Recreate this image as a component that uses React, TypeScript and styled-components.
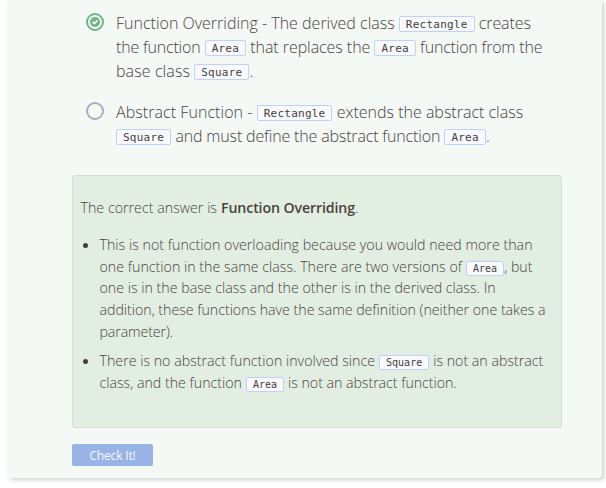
import React from "react";
import styled, { createGlobalStyle } from "styled-components";

const GlobalStyle = createGlobalStyle`
  *, *::before, *::after { box-sizing: border-box; }
  body {
    margin: 0;
    background: #ffffff;
    color: #4a4340;
    font-family: "Open Sans", sans-serif;
    font-weight: 300;
    overflow: hidden;
  }
`;

const Page = styled.div`
  height: 488px;
  padding: 0 4px 10px 7px;
`;

const Card = styled.main`
  display: flex;
  flex-direction: column;
  align-items: flex-start;
  height: 478px;
  padding: 11px 0 0 65px;
  border-radius: 0 0 4px 4px;
  background: #f4f9f6;
  box-shadow: 2px 2px 4px rgba(0, 0, 0, 0.18);
`;

const Options = styled.div`
  display: flex;
  flex-direction: column;
  gap: 17px;
  padding-left: 14px;
  font-size: 16px;
`;

const Option = styled.label`
  display: flex;
  gap: 12px;
`;

const RadioIcon = styled.svg`
  flex: none;
  width: 18px;
  height: 18px;
  margin-top: 2px;
`;

const Lines = styled.div`
  display: flex;
  flex-direction: column;
`;

const OptionLine = styled.div`
  display: flex;
  gap: 4.2px;
  height: 24px;
  line-height: 24px;
  white-space: nowrap;
`;

const Text = styled.span<{ $tracking?: number }>`
  letter-spacing: ${(p) => p.$tracking ?? 0}px;
`;

const Period = styled.span`
  margin-left: -4px;
`;

const Chip = styled.code`
  height: 16px;
  margin-top: 5px;
  padding: 0 6px;
  border: 1px solid #c0cffb;
  border-radius: 2px;
  background: #f8faff;
  color: #443e3b;
  font: 400 11px/15px "DejaVu Sans Mono", monospace;
  letter-spacing: 0.24px;
`;

const SmallChip = styled(Chip)`
  height: 15px;
  margin-top: 5px;
  font-size: 10px;
  line-height: 13px;
  letter-spacing: 0.02px;
`;

const Explanation = styled.section`
  width: 490px;
  height: 253px;
  margin-top: 27px;
  padding: 20.5px 0 0 7.5px;
  border: 1px solid #cfdfd2;
  border-radius: 3px;
  background: #e3eee3;
  font-size: 14.2px;
`;

const ExplanationLine = styled.div`
  display: flex;
  gap: 4px;
  height: 21.75px;
  line-height: 21.75px;
  white-space: nowrap;
`;

const Answer = styled.strong`
  font-weight: 600;
  letter-spacing: -0.123px;
`;

const Notes = styled.ul`
  display: flex;
  flex-direction: column;
  gap: 7.6px;
  margin: 15.5px 0 0;
  padding: 0;
  list-style: none;
`;

const Note = styled.li`
  display: flex;
  gap: 12px;
  padding-left: 2px;

  &::before {
    content: "";
    flex: none;
    width: 5px;
    height: 5px;
    margin-top: 9px;
    border-radius: 50%;
    background: #443c39;
  }
`;

const CheckButton = styled.button`
  width: 81px;
  height: 22px;
  margin-top: 16px;
  padding: 0;
  border: 0;
  border-radius: 2px;
  background: #98b3e6;
  color: #f5f8fe;
  font: 400 12px/23px "Open Sans", sans-serif;
  letter-spacing: -0.18px;
`;

function Radio({ checked = false }: { checked?: boolean }) {
  return (
    <RadioIcon viewBox="0 0 18 18" aria-hidden="true">
      <circle cx="9" cy="9" r="8" fill="none" stroke={checked ? "#6fb585" : "#aaacc3"} strokeWidth="2" />
      {checked && (
        <>
          <circle cx="9" cy="9" r="5" fill="#6fb585" />
          <path d="M6.7 8.9 8.5 10.7 11.4 7.3" fill="none" stroke="#ffffff" strokeWidth="1.5" />
        </>
      )}
    </RadioIcon>
  );
}

export default function App() {
  return (
    <>
      <GlobalStyle />
      <Page>
        <Card>
          <Options>
            <Option>
              <Radio checked />
              <Lines>
                <OptionLine>
                  <Text>Function Overriding - The derived class</Text>
                  <Chip>Rectangle</Chip>
                  <Text $tracking={-0.1}>creates</Text>
                </OptionLine>
                <OptionLine>
                  <Text $tracking={-0.2}>the function</Text>
                  <Chip>Area</Chip>
                  <Text $tracking={-0.06}>that replaces the</Text>
                  <Chip>Area</Chip>
                  <Text $tracking={-0.2}>function from the</Text>
                </OptionLine>
                <OptionLine>
                  <Text $tracking={0.1}>base class</Text>
                  <Chip>Square</Chip>
                  <Period>.</Period>
                </OptionLine>
              </Lines>
            </Option>
            <Option>
              <Radio />
              <Lines>
                <OptionLine>
                  <Text $tracking={0.06}>Abstract Function -</Text>
                  <Chip>Rectangle</Chip>
                  <Text>extends the abstract class</Text>
                </OptionLine>
                <OptionLine>
                  <Chip>Square</Chip>
                  <Text $tracking={-0.16}>and must define the abstract function</Text>
                  <Chip>Area</Chip>
                  <Period>.</Period>
                </OptionLine>
              </Lines>
            </Option>
          </Options>

          <Explanation>
            <ExplanationLine>
              <Text $tracking={0.027}>The correct answer is</Text>
              <Answer>Function Overriding</Answer>
              <Period>.</Period>
            </ExplanationLine>
            <Notes>
              <Note>
                <Lines>
                  <ExplanationLine>
                    <Text $tracking={0.025}>This is not function overloading because you would need more than</Text>
                  </ExplanationLine>
                  <ExplanationLine>
                    <Text $tracking={0.02}>one function in the same class. There are two versions of</Text>
                    <SmallChip>Area</SmallChip>
                    <Period>, but</Period>
                  </ExplanationLine>
                  <ExplanationLine>
                    <Text $tracking={0.01}>one is in the base class and the other is in the derived class. In</Text>
                  </ExplanationLine>
                  <ExplanationLine>
                    <Text $tracking={-0.017}>addition, these functions have the same definition (neither one takes a</Text>
                  </ExplanationLine>
                  <ExplanationLine>
                    <Text $tracking={-0.1}>parameter).</Text>
                  </ExplanationLine>
                </Lines>
              </Note>
              <Note>
                <Lines>
                  <ExplanationLine>
                    <Text $tracking={0.013}>There is no abstract function involved since</Text>
                    <SmallChip>Square</SmallChip>
                    <Text>is not an abstract</Text>
                  </ExplanationLine>
                  <ExplanationLine>
                    <Text>class, and the function</Text>
                    <SmallChip>Area</SmallChip>
                    <Text $tracking={-0.036}>is not an abstract function.</Text>
                  </ExplanationLine>
                </Lines>
              </Note>
            </Notes>
          </Explanation>

          <CheckButton type="button">Check It!</CheckButton>
        </Card>
      </Page>
    </>
  );
}
